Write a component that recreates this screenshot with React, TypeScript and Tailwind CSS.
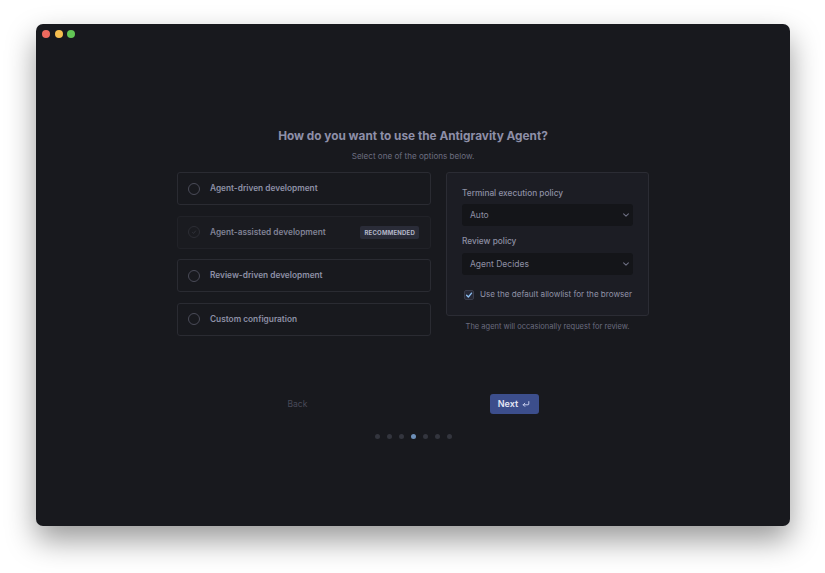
import React from "react";

const options = [
  { label: "Agent-driven development", dim: false, badge: false },
  { label: "Agent-assisted development", dim: true, badge: true },
  { label: "Review-driven development", dim: false, badge: false },
  { label: "Custom configuration", dim: false, badge: false },
];

function Chevron() {
  return (
    <svg width="8" height="8" viewBox="0 0 10 10" fill="none" stroke="#6f7184" strokeWidth="1.3" strokeLinecap="round" strokeLinejoin="round">
      <path d="M2 3.5 L5 6.5 L8 3.5" />
    </svg>
  );
}

function Select({ value }: { value: string }) {
  return (
    <div className="flex h-[22px] items-center justify-between rounded-[3px] bg-[#141519] pl-[8px] pr-[3px] text-[8.5px] text-[#8d8fa3]">
      <span>{value}</span>
      <Chevron />
    </div>
  );
}

export default function App() {
  return (
    <div
      className="h-[573px] w-[825px] bg-white pl-[36px] pt-[24px]"
      style={{ fontFamily: "Inter, 'Noto Sans', sans-serif" }}
    >
      <div className="flex h-[502px] w-[754px] flex-col rounded-[7px] bg-[#18191e] shadow-[0_14px_30px_rgba(0,0,0,0.4)]">
        {/* traffic lights */}
        <div className="flex gap-[4.5px] pl-[6px] pt-[6px]">
          <span className="h-[8px] w-[8px] rounded-full bg-[#ee6a5f]" />
          <span className="h-[8px] w-[8px] rounded-full bg-[#f5be4f]" />
          <span className="h-[8px] w-[8px] rounded-full bg-[#62c655]" />
        </div>

        <div className="mt-[90px] flex flex-col items-center">
          <h1 className="text-[11.8px] font-bold leading-[16px] text-[#8e8fa8]">
            How do you want to use the Antigravity Agent?
          </h1>
          <p className="mt-[6px] text-[8.1px] leading-[12px] text-[#6c6e80]">Select one of the options below.</p>

          <div className="mt-[10px] flex gap-[15px]">
            <div className="flex w-[254px] flex-col gap-[10.5px]">
              {options.map((o) => (
                <div
                  key={o.label}
                  className={`flex h-[33px] items-center rounded-[3px] border px-[10px] ${
                    o.dim ? "border-[#212228] bg-[#1a1b20]" : "border-[#2a2b32] bg-[#18191e]"
                  }`}
                >
                  {o.dim ? (
                    <span className="flex h-[12px] w-[12px] items-center justify-center rounded-full border border-[#2c2d34]">
                      <svg width="6" height="6" viewBox="0 0 10 10" fill="none" stroke="#34363e" strokeWidth="1.4">
                        <path d="M2 5.2 L4.2 7.3 L8 2.8" />
                      </svg>
                    </span>
                  ) : (
                    <span className="h-[12px] w-[12px] rounded-full border border-[#4a4b58]" />
                  )}
                  <span
                    className={`ml-[10px] text-[8.3px] font-semibold ${
                      o.dim ? "text-[#808295]" : "text-[#8e90a6]"
                    }`}
                  >
                    {o.label}
                  </span>
                  {o.badge && (
                    <span className="ml-auto mr-[1px] rounded-[2px] bg-[#2a2c38] px-[4px] py-[3px] text-[6px] font-bold leading-[7px] tracking-[0.2px] text-[#b4b7c8]">
                      RECOMMENDED
                    </span>
                  )}
                </div>
              ))}
            </div>

            <div className="flex flex-col items-center">
              <div className="w-[203px] rounded-[3px] border border-[#2b2c34] bg-[#1c1d24] px-[15px] pb-[15px] pt-[15px]">
                <div className="text-[8.3px] font-medium leading-[11px] text-[#8d8fa3]">Terminal execution policy</div>
                <div className="mt-[5px]">
                  <Select value="Auto" />
                </div>
                <div className="mt-[10px] text-[8.3px] font-medium leading-[11px] text-[#8d8fa3]">Review policy</div>
                <div className="mt-[6px]">
                  <Select value="Agent Decides" />
                </div>
                <div className="mt-[14px] flex h-[11px] items-center gap-[6px] pl-[2px]">
                  <span className="flex h-[10px] w-[10px] items-center justify-center rounded-[2px] border border-[#3a3c4a] bg-[#262836]">
                    <svg width="8" height="8" viewBox="0 0 10 10" fill="none" stroke="#8fc2f5" strokeWidth="1.6" strokeLinecap="round" strokeLinejoin="round">
                      <path d="M2 5.3 L4.2 7.5 L8.2 2.6" />
                    </svg>
                  </span>
                  <span className="whitespace-nowrap text-[8.1px] text-[#9092a6]">Use the default allowlist for the browser</span>
                </div>
              </div>
              <p className="mt-[5px] text-[7.5px] leading-[11px] text-[#6a6c7e]">The agent will occasionally request for review.</p>
            </div>
          </div>

          <div className="mt-[58px] flex w-[251px] items-center justify-between">
            <span className="pt-[2px] text-[8.5px] text-[#484959]">Back</span>
            <button className="flex h-[20px] w-[49px] items-center justify-center gap-[4px] rounded-[3px] bg-[#3c4e8c] text-[9px] font-semibold text-[#e3e6f4]">
              Next
              <svg width="8" height="8" viewBox="0 0 10 10" fill="none" stroke="#c9d0ee" strokeWidth="1.2" strokeLinecap="round" strokeLinejoin="round">
                <path d="M8.5 2 V5 Q8.5 6 7.5 6 H1.5" />
                <path d="M3.5 4 L1.5 6 L3.5 8" />
              </svg>
            </button>
          </div>

          <div className="mt-[20px] flex gap-[7px]">
            {[0, 1, 2, 3, 4, 5, 6].map((i) => (
              <span
                key={i}
                className={`h-[5px] w-[5px] rounded-full ${i === 3 ? "bg-[#6d8fb8]" : "bg-[#33353e]"}`}
              />
            ))}
          </div>
        </div>
      </div>
    </div>
  );
}
